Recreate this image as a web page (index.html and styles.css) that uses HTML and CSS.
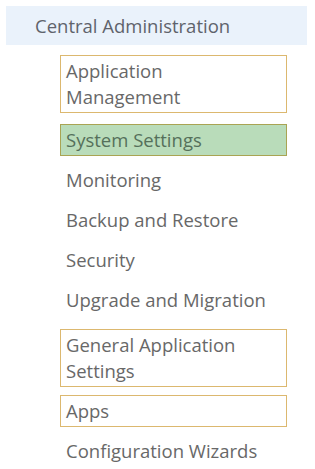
FILE: index.html
```html
<!DOCTYPE html>
<html lang="en">
<head>
  <meta charset="UTF-8">
  <meta name="viewport" content="width=device-width, initial-scale=1.0">
  <title>Central Administration</title>
  <link rel="stylesheet" href="styles.css">
</head>
<body>
  <div class="nav">
    <div class="nav-head">Central Administration</div>
    <ul class="nav-list">
      <li class="marked first">Application Management</li>
      <li class="marked selected">System Settings</li>
      <li>Monitoring</li>
      <li>Backup and Restore</li>
      <li>Security</li>
      <li>Upgrade and Migration</li>
      <li class="marked gap">General Application Settings</li>
      <li class="marked">Apps</li>
      <li>Configuration Wizards</li>
    </ul>
  </div>
</body>
</html>
```

FILE: styles.css
```css
body {
  margin: 0;
  padding: 6px 8px 0 6px;
  background-color: white;
  font-family: "Open Sans", Arial, sans-serif;
  color: #686868;
}
.nav-head {
  background-color: #eaf2fb;
  padding: 8px 0 8px 29px;
  font-size: 18.5px;
  line-height: 23px;
  color: #5f636b;
}
.nav-list {
  list-style: none;
  margin: 10px 0 0 54px;
  padding: 0;
}
.nav-list li {
  box-sizing: border-box;
  width: 227px;
  font-size: 18.5px;
  line-height: 26px;
  padding: 2px 5px;
  border: 1px solid transparent;
  margin-bottom: 8px;
}
.nav-list li.first {
  margin-bottom: 11px;
}
.nav-list li.marked {
  border-color: #dcb86f;
}
.nav-list li.selected {
  background-color: #b9dcba;
  border-color: #a9a453;
  color: #55705a;
}
.nav-list li.gap {
  margin-top: 13px;
}
```
